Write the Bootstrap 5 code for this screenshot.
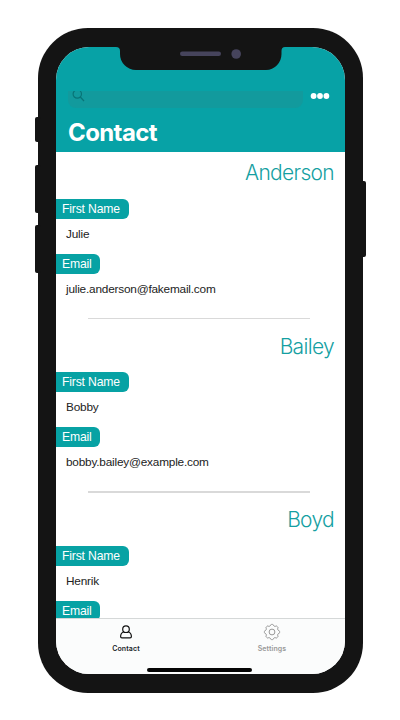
<!DOCTYPE html>
<html lang="en">
<head>
<meta charset="utf-8">
<meta name="viewport" content="width=device-width, initial-scale=1">
<title>Contact</title>
<link href="https://cdn.jsdelivr.net/npm/bootstrap@5.3.0/dist/css/bootstrap.min.css" rel="stylesheet">
<style>
body{background:#fff;font-family:"Liberation Sans",Arial,sans-serif;height:720px}
.phone{width:325px;height:664.5px;margin:28px 0 0 38px;padding:19px 18px 18.5px;background:#141414;border-radius:50px}
.side-key{position:absolute;background:#141414;width:6px;border-radius:2px}
.key-mute{left:-3px;top:89px;height:25px}
.key-up{left:-3px;top:137px;height:48px}
.key-down{left:-3px;top:197px;height:48px}
.key-power{right:-3px;top:153px;height:76px}
.screen{border-radius:33px;background:#fff}
.notch{position:absolute;left:59px;top:-1px;z-index:2}
.top-bar{height:105px;background:#07a2a6;padding:44px 0 0 12px}
.search{width:235px;height:16.5px;background:#129a9d;border-radius:0 0 8px 8px;overflow:hidden}
.search svg{display:block;margin-left:4px}
.more-dots{margin-left:7px}
.title{font:700 24px/28px Inter,sans-serif;margin:11px 0 0;letter-spacing:-.6px}
.person{height:173.6px;padding-top:9px}
.surname{font:300 21px/24px Inter,sans-serif;letter-spacing:-.68px;color:#159fa2;margin:0 11px 13.6px 0}
.label-tag{height:20px;line-height:20px;font-size:12.2px;padding:0 8.7px 0 6px;border-radius:0 6px 6px 0;background:#07a2a4;width:max-content;letter-spacing:-.17px}
.value{font-size:11.8px;line-height:16px;margin:7px 0 12.3px 10px;color:#222;letter-spacing:-.2px}
.rule{height:1.3px;margin:21px 35px 0 32px;background:#d9d9d9}
.tabs{height:56px;background:#fbfcfc;border-top:1px solid #d5d8d8}
.tab{font:600 7px/10px Inter,sans-serif;letter-spacing:.1px;padding-top:4px}
.tab svg{display:block;margin:0 auto 3px}
.contact-tab{width:140px}
.settings-tab{width:152px;color:#999}
.home-bar{position:absolute;left:91px;bottom:2.5px;width:105px;height:3.5px;border-radius:2px;background:#050505}
</style>
<script src="https://cdn.jsdelivr.net/npm/bootstrap@5.3.0/dist/js/bootstrap.bundle.min.js"></script>
</head>
<body class="overflow-hidden d-flex align-items-start">
<div class="phone position-relative flex-shrink-0">
  <span class="side-key key-mute"></span><span class="side-key key-up"></span><span class="side-key key-down"></span><span class="side-key key-power"></span>
  <div class="screen position-relative overflow-hidden h-100 d-flex flex-column">
    <svg class="notch" width="170" height="26" viewBox="0 0 170 26">
      <path d="M0 0H170V1Q166.500 1 166.500 5V8A16 16 0 0 1 151 24H21A16 16 0 0 1 5 8V5Q5 1 1 1H0Z" fill="#141414"/>
      <rect x="65" y="5.500" width="41" height="4.500" rx="2.250" fill="#46445c"/><circle cx="121.200" cy="8" r="4.800" fill="#46445c"/>
    </svg>
    <header class="top-bar text-white flex-shrink-0">
      <div class="d-flex">
        <div class="search"><svg width="14" height="12" viewBox="0 0 14 12" fill="none" stroke="#087477" stroke-width="1.200"><circle cx="5.300" cy="3" r="4.200"/><path d="M8.300 6L12 10"/></svg></div>
        <svg class="more-dots" width="24" height="10" viewBox="0 0 24 10" fill="#fff"><circle cx="3.600" cy="5" r="2.900"/><circle cx="10" cy="5" r="2.900"/><circle cx="16.400" cy="5" r="2.900"/></svg>
      </div>
      <h1 class="title">Contact</h1>
    </header>
    <main class="flex-grow-1 overflow-hidden">
      <section class="person">
        <h2 class="surname text-end">Anderson</h2>
        <div class="label-tag text-white">First Name</div><div class="value">Julie</div>
        <div class="label-tag text-white">Email</div><div class="value mb-0">julie.anderson@fakemail.com</div>
        <div class="rule"></div>
      </section>
      <section class="person">
        <h2 class="surname text-end">Bailey</h2>
        <div class="label-tag text-white">First Name</div><div class="value">Bobby</div>
        <div class="label-tag text-white">Email</div><div class="value mb-0">bobby.bailey@example.com</div>
        <div class="rule"></div>
      </section>
      <section class="person">
        <h2 class="surname text-end">Boyd</h2>
        <div class="label-tag text-white">First Name</div><div class="value">Henrik</div>
        <div class="label-tag text-white">Email</div>
      </section>
    </main>
    <nav class="tabs d-flex flex-shrink-0 text-center">
      <div class="tab text-dark contact-tab flex-shrink-0"><svg width="18" height="18" viewBox="0 0 18 18" fill="none" stroke="#111" stroke-width="1.200" stroke-linejoin="round"><circle cx="9" cy="6.200" r="3.300"/><path d="M7 8.700C4.700 9.400 3.600 11 3.600 13.400Q3.600 14.800 4.900 14.800H13.100Q14.400 14.800 14.400 13.400C14.400 11 13.300 9.400 11 8.700"/></svg>Contact</div>
      <div class="tab settings-tab flex-shrink-0"><svg width="18" height="18" viewBox="0 0 18 18" fill="none" stroke="#8c8c8c" stroke-width=".9" stroke-linejoin="round"><circle cx="9" cy="9" r="2.900"/><path id="gear"/></svg>Settings</div>
      <div class="home-bar"></div>
    </nav>
  </div>
</div>
<script>
// Eight rounded teeth around the settings wheel
let d='';
for(let i=0;i<=96;i++){const a=i/96*2*Math.PI,w=Math.cos(8*a),r=6.9+Math.tanh(w*2.2+.5)*.7;d+=(i?'L':'M')+(9+r*Math.cos(a)).toFixed(2)+' '+(9+r*Math.sin(a)).toFixed(2)}
document.getElementById('gear').setAttribute('d',d+'Z');
</script>
</body>
</html>
